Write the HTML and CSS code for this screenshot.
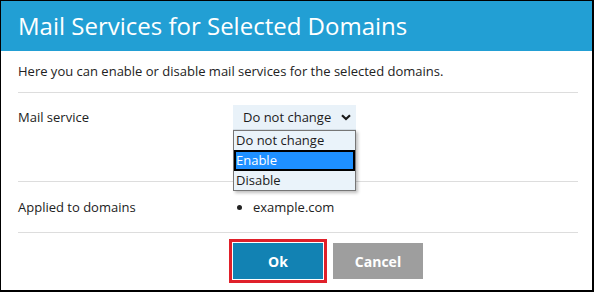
FILE: index.html
```html
<!DOCTYPE html>
<html lang="en">
<head>
    <meta charset="UTF-8">
    <meta name="viewport" content="width=device-width, initial-scale=1.0">
    <title>Mail Services for Selected Domains</title>
    <link rel="stylesheet" href="styles.css">
</head>
<body>
<div class="dialog">
    <div class="dialog-header">Mail Services for Selected Domains</div>
    <div class="dialog-body">
        <p class="intro">Here you can enable or disable mail services for the selected domains.</p>
        <div class="form-row form-row-tall">
            <div class="form-label">Mail service</div>
            <div class="form-field">
                <div class="select-box">
                    <span>Do not change</span>
                    <svg class="chevron" width="10" height="7" viewBox="0 0 10 7">
                        <path d="M1 1.2 L5 5 L9 1.2" fill="none" stroke="#1a1a1a" stroke-width="2.2"/>
                    </svg>
                    <ul class="select-menu">
                        <li>Do not change</li>
                        <li class="active">Enable</li>
                        <li>Disable</li>
                    </ul>
                </div>
            </div>
        </div>
        <div class="form-row form-row-short">
            <div class="form-label">Applied to domains</div>
            <div class="form-field">
                <ul class="domain-list">
                    <li>example.com</li>
                </ul>
            </div>
        </div>
        <div class="dialog-footer">
            <button class="btn btn-primary">Ok</button>
            <button class="btn btn-cancel">Cancel</button>
        </div>
    </div>
</div>
</body>
</html>
```

FILE: styles.css
```css
body {
    margin: 0;
    font-family: "Open Sans", "DejaVu Sans", sans-serif;
    color: #222;
    background: #fff;
}
.dialog {
    width: 594px;
    height: 292px;
    box-sizing: border-box;
    border: 1px solid #000;
    border-right-width: 2px;
    border-bottom-width: 2px;
    overflow: hidden;
}
.dialog-header {
    height: 50px;
    line-height: 50px;
    padding-left: 17px;
    background-color: #229fd4;
    color: #fff;
    font-size: 24px;
}
.dialog-body {
    padding: 0 14px 0 17px;
    font-size: 13px;
}
.intro {
    margin: 0;
    padding: 10px 0 11px;
    line-height: 20px;
    border-bottom: 1px solid #ddd;
}
.form-row {
    display: flex;
    box-sizing: border-box;
    border-bottom: 1px solid #ddd;
    line-height: 20px;
}
.form-row-tall {
    height: 89px;
    padding-top: 12px;
}
.form-row-tall .form-label {
    padding-top: 2px;
}
.form-row-short {
    height: 51px;
    padding-top: 15px;
}
.form-label {
    width: 215px;
    flex: none;
}
.form-field {
    flex: 1;
}
.select-box {
    position: relative;
    width: 123px;
    height: 25px;
    box-sizing: border-box;
    padding-left: 10px;
    line-height: 24px;
    background-color: #e9f2f9;
    border-bottom: 1px solid #d5dfe7;
    color: #1c1c1c;
}
.chevron {
    position: absolute;
    right: 5px;
    top: 9px;
}
.select-menu {
    position: absolute;
    top: 25px;
    left: 0;
    width: 123px;
    box-sizing: border-box;
    margin: 0;
    padding: 0;
    list-style: none;
    background-color: #eaf3fa;
    border: 1px solid #767676;
    box-shadow: 2px 2px 3px rgba(0, 0, 0, 0.25);
    z-index: 2;
}
.select-menu li {
    height: 19px;
    line-height: 19px;
    padding-left: 2px;
    box-sizing: border-box;
}
.select-menu li.active {
    height: 21px;
    line-height: 17px;
    padding-left: 0;
    background-color: #1e90ff;
    color: #fff;
    border: 2px solid #000;
}
.domain-list {
    margin: 0;
    padding-left: 20px;
    list-style: disc;
}
.dialog-footer {
    display: flex;
    gap: 10px;
    padding: 10px 0 0 215px;
}
.btn {
    width: 90px;
    height: 36px;
    border: none;
    color: #fff;
    font-family: "Open Sans", "DejaVu Sans", sans-serif;
    font-size: 14px;
    font-weight: bold;
    cursor: pointer;
}
.btn-primary {
    background-color: #1282b3;
    box-shadow: 0 0 0 1px #fff, 0 0 0 4px #e0202a;
}
.btn-cancel {
    background-color: #9e9e9e;
}
```
